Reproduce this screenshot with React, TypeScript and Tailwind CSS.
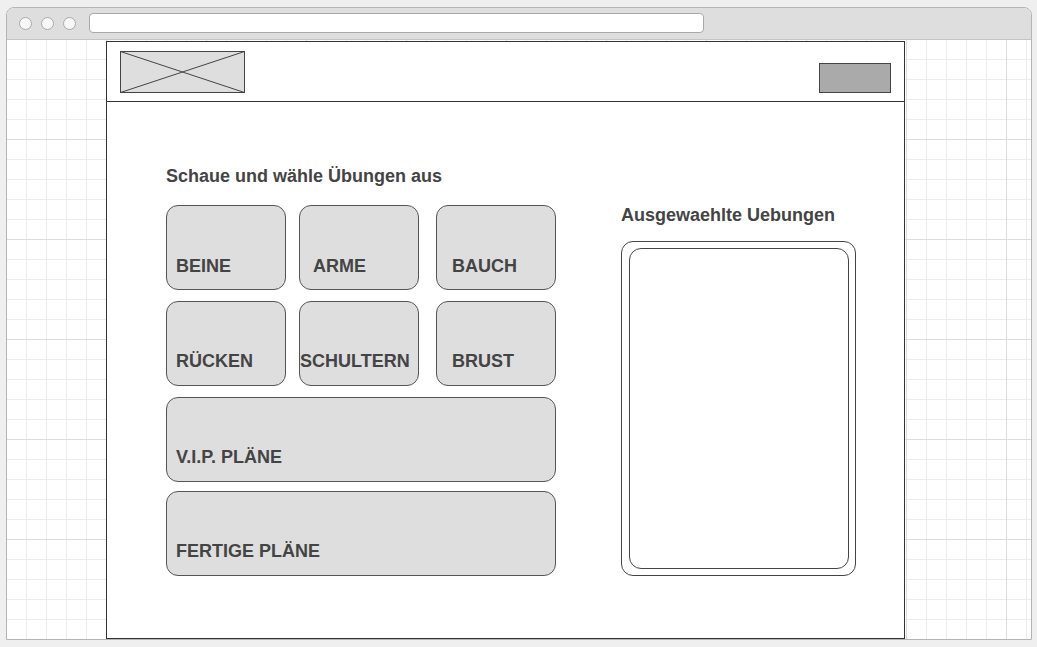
const cardBase =
  'flex items-end h-[85px] rounded-[12px] border border-[#555555] bg-[#dedede] text-[18px] leading-[20px] font-bold text-[#444444] whitespace-nowrap';

const Card = ({ label, className }: { label: string; className: string }) => (
  <div className={`${cardBase} ${className}`}>
    <span>{label}</span>
  </div>
);

export default function App() {
  return (
    <div className="w-[1037px] h-[647px] overflow-hidden bg-[#efefef] pt-[7px] pl-[6px] font-['Liberation_Sans',Arial,sans-serif]">
      {/* Browser window */}
      <div className="w-[1026px] h-[633px] flex flex-col rounded-t-[8px] border border-[#b4b4b4] bg-white overflow-hidden">
        {/* Title bar */}
        <div className="h-[32px] shrink-0 flex items-center bg-[#dedede] border-b border-[#c4c4c4] pl-[12px] pb-[1px]">
          <div className="flex gap-[9px]">
            <div className="w-[13px] h-[13px] rounded-full bg-[#f7f7f7] border border-[#a9a9a9]" />
            <div className="w-[13px] h-[13px] rounded-full bg-[#f7f7f7] border border-[#a9a9a9]" />
            <div className="w-[13px] h-[13px] rounded-full bg-[#f7f7f7] border border-[#a9a9a9]" />
          </div>
          <div className="ml-[13px] w-[615px] h-[20px] rounded-[4px] bg-white border border-[#a9a9a9]" />
        </div>

        {/* Grid canvas */}
        <div className="flex-1 pt-[1px] pl-[99px] [background-image:linear-gradient(#dcdcdc_1px,transparent_1px),linear-gradient(90deg,#dcdcdc_1px,transparent_1px),linear-gradient(#ececec_1px,transparent_1px),linear-gradient(90deg,#ececec_1px,transparent_1px)] [background-size:100px_100px,100px_100px,20px_20px,20px_20px] [background-position:99px_99px,99px_99px,19px_19px,19px_19px]">
          {/* Page frame */}
          <div className="w-[799px] h-[598px] border border-[#333333] bg-white flex flex-col">
            {/* Header */}
            <div className="h-[60px] shrink-0 flex justify-between border-b border-[#333333] pl-[13px] pr-[13px]">
              <svg width="125" height="42" viewBox="0 0 125 42" className="mt-[9px]">
                <rect x="0.5" y="0.5" width="124" height="41" fill="#dedede" stroke="#444444" />
                <line x1="0.5" y1="0.5" x2="124.5" y2="41.5" stroke="#444444" />
                <line x1="0.5" y1="41.5" x2="124.5" y2="0.5" stroke="#444444" />
              </svg>
              <div className="mt-[21px] w-[72px] h-[30px] bg-[#aaaaaa] border border-[#444444]" />
            </div>

            {/* Body */}
            <div className="flex pt-[64px] pl-[59px]">
              <div className="w-[390px] flex flex-col">
                <h1 className="text-[18px] leading-[20px] font-bold text-[#444444]">Schaue und wähle Übungen aus</h1>
                <div className="mt-[19px] flex gap-[13px]">
                  <Card label="BEINE" className="w-[120px] pl-[9px] pb-[13px]" />
                  <Card label="ARME" className="w-[120px] pl-[13px] pb-[13px]" />
                  <Card label="BAUCH" className="w-[120px] pl-[15px] pb-[13px] ml-[4px]" />
                </div>
                <div className="mt-[11px] flex gap-[13px]">
                  <Card label="RÜCKEN" className="w-[120px] pl-[9px] pb-[14px] h-[84px]" />
                  <Card label="SCHULTERN" className="w-[120px] pl-0 pb-[14px] h-[84px]" />
                  <Card label="BRUST" className="w-[120px] pl-[15px] pb-[14px] ml-[4px] h-[84px]" />
                </div>
                <Card label="V.I.P. PLÄNE" className="mt-[11px] w-[390px] pl-[9px] pb-[14px]" />
                <Card label="FERTIGE PLÄNE" className="mt-[9px] w-[390px] pl-[9px] pb-[14px]" />
              </div>

              <div className="ml-[65px] mt-[39px] flex flex-col">
                <h2 className="text-[18px] leading-[20px] font-bold text-[#444444] whitespace-nowrap">Ausgewaehlte Uebungen</h2>
                <div className="mt-[16px] w-[235px] h-[335px] rounded-[12px] border border-[#444444] pt-[6px] pl-[7px]">
                  <div className="w-[220px] h-[321px] rounded-[12px] border border-[#444444]" />
                </div>
              </div>
            </div>
          </div>
        </div>
      </div>
    </div>
  );
}
